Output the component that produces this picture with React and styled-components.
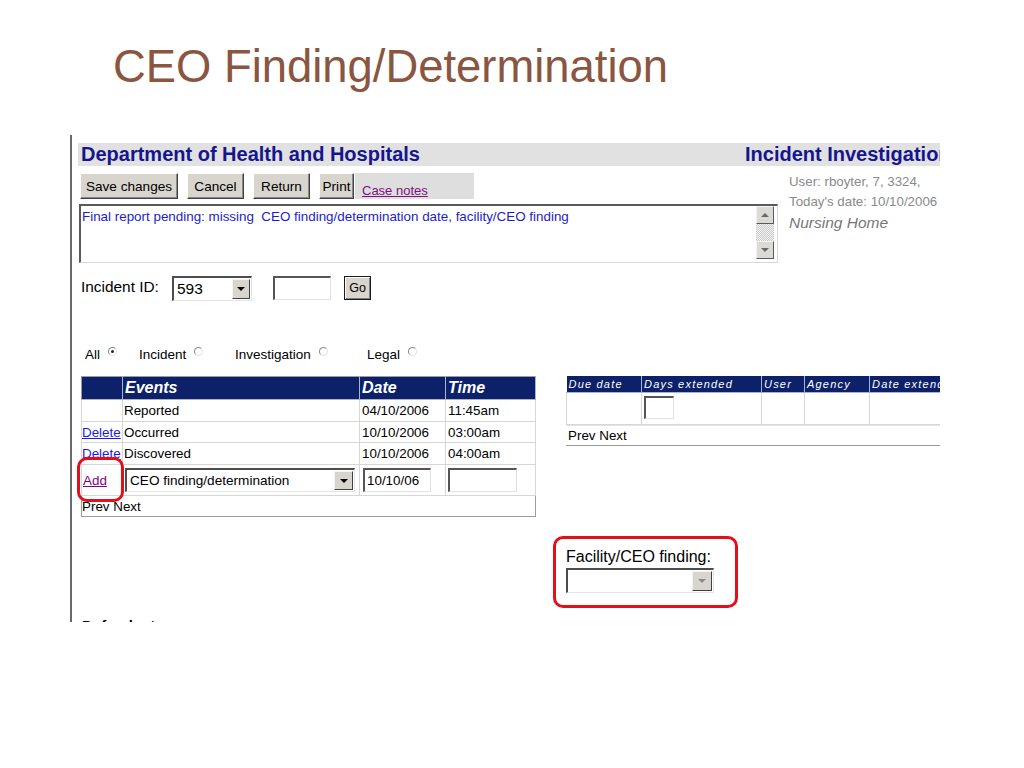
import React from 'react';
import styled, { createGlobalStyle } from 'styled-components';

const GlobalStyle = createGlobalStyle`
  html, body { margin: 0; padding: 0; background: #fff; }
  body { font-family: "Liberation Sans", Arial, sans-serif; }
`;

const Slide = styled.div`
  width: 1024px;
  height: 768px;
  overflow: hidden;
  background: #fff;
  padding-top: 41px;
  box-sizing: border-box;
`;

const Title = styled.h1`
  margin: 0 0 0 113px;
  font-weight: normal;
  font-size: 45.4px;
  line-height: 52px;
  color: #8b563f;
  font-family: "Liberation Sans", Arial, sans-serif;
`;

const Shot = styled.div`
  margin: 42px 0 0 70px;
  width: 870px;
  height: 487px;
  box-sizing: border-box;
  border-left: 2px solid #6a6a6a;
  overflow: hidden;
  padding: 8px 0 0 6px;
  font-family: "Liberation Sans", Arial, sans-serif;
  color: #000;
`;

const Inner = styled.div`
  width: 920px;
`;

const HeaderBar = styled.div`
  display: grid;
  grid-template-columns: 667px 1fr;
  height: 23px;
  background: #e1e1e1;
  font-weight: bold;
  font-size: 20px;
  line-height: 23px;
  color: #15158f;
  white-space: nowrap;
`;

const DeptName = styled.span`
  padding-left: 3px;
`;

const TopSection = styled.div`
  display: flex;
  margin-top: 6px;
`;

const LeftCol = styled.div`
  width: 700px;
  margin-left: 1px;
`;

const ButtonRow = styled.div`
  display: flex;
  height: 27px;
  padding-left: 1px;
`;

const ButtonGroup = styled.div`
  display: flex;
  gap: 9px;
`;

const Button = styled.button`
  width: ${p => p.$w}px;
  height: 26px;
  margin-top: 1px;
  padding: 0;
  box-sizing: border-box;
  background: #d8d5ce;
  border: 1px solid;
  border-color: #ffffff #404040 #404040 #ffffff;
  box-shadow: inset -1px -1px #8a8a8a;
  font-family: "Liberation Sans", Arial, sans-serif;
  font-size: 13.6px;
  color: #000;
  text-align: center;
`;

const CaseNotesCell = styled.div`
  width: 119px;
  height: 26px;
  margin-top: 1px;
  margin-left: 1px;
  box-sizing: border-box;
  padding: 9px 0 0 7px;
  background: #dedede;
  line-height: 16px;
`;

const CaseNotesLink = styled.a`
  font-size: 13px;
  color: #800f80;
  text-decoration: underline;
`;

const NoteBox = styled.div`
  display: flex;
  margin-top: 5px;
  width: 699px;
  height: 59px;
  box-sizing: border-box;
  border-style: solid;
  border-width: 2px 1px 1px 2px;
  border-color: #5a5a5a #d8d8d8 #d8d8d8 #5a5a5a;
  background: #fff;
`;

const NoteText = styled.div`
  flex: 1;
  padding: 3px 1px;
  font-size: 13.4px;
  line-height: 16px;
  color: #1d1dc8;
  white-space: pre;
  overflow: hidden;
`;

const ScrollTrack = styled.div`
  display: flex;
  flex-direction: column;
  justify-content: space-between;
  width: 18px;
  margin: 0 3px 3px 0;
  background: repeating-conic-gradient(#c9c9c9 0 25%, #f4f4f4 0 50%) 0 0 / 2px 2px;
`;

const ScrollButton = styled.div`
  display: flex;
  align-items: center;
  justify-content: center;
  height: 18px;
  box-sizing: border-box;
  background: #dcdad4;
  border: 1px solid;
  border-color: #f4f4f4 #5a5a5a #5a5a5a #f4f4f4;
`;

const Triangle = styled.span`
  width: 0;
  height: 0;
  border-left: ${p => p.$s}px solid transparent;
  border-right: ${p => p.$s}px solid transparent;
  ${p => (p.$up
    ? `border-bottom: ${p.$s}px solid ${p.$c};`
    : `border-top: ${p.$s}px solid ${p.$c};`)}
`;

const InfoCol = styled.div`
  margin-left: 10px;
  padding-top: 0;
  color: #8a8a8a;
  white-space: nowrap;
`;

const InfoLine = styled.div`
  font-size: 13.3px;
  line-height: 20px;
`;

const InfoItalic = styled.div`
  font-size: 15.5px;
  line-height: 21px;
  font-style: italic;
  color: #777;
`;

const IncidentRow = styled.div`
  display: flex;
  align-items: center;
  height: 26px;
  margin-top: 12px;
  padding-left: 3px;
`;

const FieldLabel = styled.span`
  width: ${p => p.$w}px;
  font-size: ${p => p.$fs}px;
  margin-top: -3px;
  white-space: nowrap;
`;

const SelectFrame = styled.div`
  display: flex;
  align-items: center;
  box-sizing: border-box;
  width: ${p => p.$w}px;
  height: ${p => p.$h}px;
  margin-left: ${p => p.$ml || 0}px;
  margin-top: ${p => p.$mt || 0}px;
  background: #fff;
  border-style: solid;
  border-width: 2px 1px 1px 2px;
  border-color: #4d4d4d #e4e4e4 #e4e4e4 #4d4d4d;
  padding: 0 1px 0 3px;
  font-size: ${p => p.$fs}px;
  color: #000;
`;

const SelectText = styled.span`
  flex: 1;
  white-space: nowrap;
  overflow: hidden;
`;

const DropButton = styled.span`
  display: flex;
  align-items: center;
  justify-content: center;
  width: ${p => p.$bw}px;
  align-self: stretch;
  margin: 1px 0;
  box-sizing: border-box;
  background: #d8d5ce;
  border: 1px solid;
  border-color: #f4f4f4 #404040 #404040 #f4f4f4;
`;

const TextInput = styled.div`
  display: flex;
  align-items: center;
  box-sizing: border-box;
  width: ${p => p.$w}px;
  height: ${p => p.$h}px;
  margin-left: ${p => p.$ml || 0}px;
  margin-top: ${p => p.$mt || 0}px;
  padding-left: 2px;
  background: #fff;
  border-style: solid;
  border-width: 2px 1px 1px 2px;
  border-color: #555 #e2e2e2 #e2e2e2 #555;
  font-size: 13.4px;
  white-space: nowrap;
`;

const GoButton = styled.button`
  width: 27px;
  height: 24px;
  margin-left: ${p => p.$ml}px;
  padding: 0;
  box-sizing: border-box;
  background: #d8d5ce;
  border: 1px solid #1a1a1a;
  box-shadow: inset 1px 1px #fff, inset -1px -1px #808080;
  font-family: "Liberation Sans", Arial, sans-serif;
  font-size: 12.5px;
  color: #000;
`;

const RadioRow = styled.div`
  display: flex;
  align-items: center;
  height: 17px;
  margin-top: 45px;
  padding-left: 7px;
  font-size: 13.5px;
`;

const RadioOption = styled.label`
  display: flex;
  align-items: center;
  gap: 8px;
  width: ${p => p.$w}px;
  white-space: nowrap;
`;

const RadioCircle = styled.span`
  position: relative;
  width: 9px;
  height: 9px;
  margin-bottom: 6px;
  box-sizing: border-box;
  border-radius: 50%;
  border: 1px solid;
  border-color: #8a8a8a #e2e2e2 #e2e2e2 #8a8a8a;
  background: #fff;
  &::after {
    content: "";
    display: ${p => (p.$checked ? 'block' : 'none')};
    position: absolute;
    left: 2px;
    top: 2px;
    width: 3px;
    height: 3px;
    border-radius: 50%;
    background: #222;
  }
`;

const MainGrid = styled.div`
  display: flex;
  align-items: flex-start;
  margin-top: 13px;
  padding-left: 3px;
`;

const Table = styled.table`
  border-collapse: collapse;
  table-layout: fixed;
  width: ${p => p.$w}px;
  border: ${p => (p.$outlined ? '1px solid #9c9c9c' : 'none')};
  font-size: 13.4px;
`;

const Col = styled.col`
  width: ${p => p.$w}px;
`;

const HeadCell = styled.th`
  height: ${p => p.$h}px;
  padding: 0 ${p => p.$pad}px;
  background: #0c2169;
  color: #fff;
  font-weight: ${p => (p.$bold ? 'bold' : 'normal')};
  font-style: italic;
  font-size: ${p => p.$fs}px;
  letter-spacing: ${p => p.$ls || 0}px;
  text-align: left;
  white-space: nowrap;
  overflow: hidden;
  border-right: 1px solid #aab2cc;
  border-bottom: 1px solid #aab2cc;
`;

const Cell = styled.td`
  position: relative;
  height: ${p => p.$h}px;
  padding: 0 ${p => (p.$pad === undefined ? 2 : p.$pad)}px;
  border: 1px solid #d6d6d6;
  vertical-align: ${p => p.$va || 'middle'};
  white-space: nowrap;
`;

const PlainCell = styled.td`
  height: ${p => p.$h}px;
  padding: 0 ${p => p.$pad}px;
  white-space: nowrap;
`;

const BlueLink = styled.a`
  color: #1a1aee;
  text-decoration: underline;
`;

const VisitedLink = styled.a`
  color: #800080;
  text-decoration: underline;
  padding-left: 1px;
`;

const Annotation = styled.span`
  position: absolute;
  top: ${p => p.$t}px;
  left: ${p => p.$l}px;
  right: ${p => p.$r}px;
  bottom: ${p => p.$b}px;
  border: 3px solid #e3101c;
  border-radius: 10px;
  pointer-events: none;
  z-index: 2;
`;

const RightCol = styled.div`
  margin-left: 30px;
  width: 420px;
`;

const PrevNextBar = styled.div`
  height: 21px;
  line-height: 20px;
  padding-left: 2px;
  box-sizing: border-box;
  border-top: 1px solid #e4e4e4;
  border-bottom: 1px solid #9a9a9a;
  font-size: 13.4px;
`;

const FacilityBlock = styled.div`
  position: relative;
  width: 148px;
  margin: 102px 0 0 0;
`;

const FacilityLabel = styled.div`
  font-size: 16px;
  line-height: 18px;
  white-space: nowrap;
`;

const Defendant = styled.div`
  margin-top: 24px;
  padding-left: 4px;
  font-weight: bold;
  font-size: 15px;
  line-height: 18px;
`;

function Select({ w, h, fs, ml, mt, bw, value, disabled }) {
  return (
    <SelectFrame $w={w} $h={h} $fs={fs} $ml={ml} $mt={mt}>
      <SelectText>{value}</SelectText>
      <DropButton $bw={bw}>
        <Triangle $s={4} $c={disabled ? '#8a8a8a' : '#000'} />
      </DropButton>
    </SelectFrame>
  );
}

export default function App() {
  return (
    <Slide>
      <GlobalStyle />
      <Title>CEO Finding/Determination</Title>
      <Shot>
        <Inner>
          <HeaderBar>
            <DeptName>Department of Health and Hospitals</DeptName>
            <span>Incident Investigation</span>
          </HeaderBar>

          <TopSection>
            <LeftCol>
              <ButtonRow>
                <ButtonGroup>
                  <Button $w={98}>Save changes</Button>
                  <Button $w={57}>Cancel</Button>
                  <Button $w={57}>Return</Button>
                  <Button $w={35}>Print</Button>
                </ButtonGroup>
                <CaseNotesCell>
                  <CaseNotesLink>Case notes</CaseNotesLink>
                </CaseNotesCell>
              </ButtonRow>
              <NoteBox>
                <NoteText>Final report pending: missing  CEO finding/determination date, facility/CEO finding</NoteText>
                <ScrollTrack>
                  <ScrollButton><Triangle $up $s={4} $c="#6a6a6a" /></ScrollButton>
                  <ScrollButton><Triangle $s={4} $c="#6a6a6a" /></ScrollButton>
                </ScrollTrack>
              </NoteBox>
            </LeftCol>
            <InfoCol>
              <InfoLine>User: rboyter, 7, 3324,</InfoLine>
              <InfoLine>Today's date: 10/10/2006</InfoLine>
              <InfoItalic>Nursing Home</InfoItalic>
            </InfoCol>
          </TopSection>

          <IncidentRow>
            <FieldLabel $w={91} $fs={15.4}>Incident ID:</FieldLabel>
            <Select w={80} h={25} fs={15.5} bw={18} value="593" />
            <TextInput $w={58} $h={24} $ml={21} />
            <GoButton $ml={13}>Go</GoButton>
          </IncidentRow>

          <RadioRow>
            <RadioOption $w={54}>All <RadioCircle $checked /></RadioOption>
            <RadioOption $w={96}>Incident <RadioCircle /></RadioOption>
            <RadioOption $w={132}>Investigation <RadioCircle /></RadioOption>
            <RadioOption $w={60}>Legal <RadioCircle /></RadioOption>
          </RadioRow>

          <MainGrid>
            <Table $w={454} $outlined>
              <colgroup>
                <Col $w={41} />
                <Col $w={237} />
                <Col $w={86} />
                <Col $w={90} />
              </colgroup>
              <thead>
                <tr>
                  <HeadCell $h={22} $pad={2} $fs={16} $bold />
                  <HeadCell $h={22} $pad={2} $fs={16} $bold>Events</HeadCell>
                  <HeadCell $h={22} $pad={2} $fs={16} $bold>Date</HeadCell>
                  <HeadCell $h={22} $pad={2} $fs={16} $bold>Time</HeadCell>
                </tr>
              </thead>
              <tbody>
                <tr>
                  <Cell $h={21} $pad={0} />
                  <Cell $h={21} $pad={1}>Reported</Cell>
                  <Cell $h={21}>04/10/2006</Cell>
                  <Cell $h={21}>11:45am</Cell>
                </tr>
                <tr>
                  <Cell $h={20} $pad={0}><BlueLink>Delete</BlueLink></Cell>
                  <Cell $h={20} $pad={1}>Occurred</Cell>
                  <Cell $h={20}>10/10/2006</Cell>
                  <Cell $h={20}>03:00am</Cell>
                </tr>
                <tr>
                  <Cell $h={21} $pad={0}><BlueLink>Delete</BlueLink></Cell>
                  <Cell $h={21} $pad={1}>Discovered</Cell>
                  <Cell $h={21}>10/10/2006</Cell>
                  <Cell $h={21}>04:00am</Cell>
                </tr>
                <tr>
                  <Cell $h={30} $pad={0}>
                    <VisitedLink>Add</VisitedLink>
                    <Annotation $t={-8} $l={-5} $r={-2} $b={-7} />
                  </Cell>
                  <Cell $h={30} $pad={2}>
                    <Select w={230} h={24} fs={13.6} bw={19} value="CEO finding/determination" />
                  </Cell>
                  <Cell $h={30} $pad={2}>
                    <TextInput $w={68} $h={24} $ml={1}>10/10/06</TextInput>
                  </Cell>
                  <Cell $h={30} $pad={2}>
                    <TextInput $w={69} $h={24} />
                  </Cell>
                </tr>
                <tr>
                  <PlainCell colSpan={4} $h={20} $pad={0}>Prev Next</PlainCell>
                </tr>
              </tbody>
            </Table>

            <RightCol>
              <Table $w={420}>
                <colgroup>
                  <Col $w={75} />
                  <Col $w={120} />
                  <Col $w={43} />
                  <Col $w={65} />
                  <Col $w={117} />
                </colgroup>
                <thead>
                  <tr>
                    <HeadCell $h={16} $pad={2} $fs={11} $ls={1.2}>Due date</HeadCell>
                    <HeadCell $h={16} $pad={2} $fs={11} $ls={1.2}>Days extended</HeadCell>
                    <HeadCell $h={16} $pad={2} $fs={11} $ls={1.2}>User</HeadCell>
                    <HeadCell $h={16} $pad={2} $fs={11} $ls={1.2}>Agency</HeadCell>
                    <HeadCell $h={16} $pad={2} $fs={11} $ls={1.2}>Date extended</HeadCell>
                  </tr>
                </thead>
                <tbody>
                  <tr>
                    <Cell $h={31} $va="top" />
                    <Cell $h={31} $va="top">
                      <TextInput $w={30} $h={23} $mt={3} />
                    </Cell>
                    <Cell $h={31} $va="top" />
                    <Cell $h={31} $va="top" />
                    <Cell $h={31} $va="top" />
                  </tr>
                </tbody>
              </Table>
              <PrevNextBar>Prev Next</PrevNextBar>

              <FacilityBlock>
                <FacilityLabel>Facility/CEO finding:</FacilityLabel>
                <Select w={148} h={25} mt={2} fs={14} bw={20} value="" disabled />
                <Annotation $t={-12} $l={-13} $r={-24} $b={-15} />
              </FacilityBlock>
            </RightCol>
          </MainGrid>

          <Defendant>Defendants</Defendant>
        </Inner>
      </Shot>
    </Slide>
  );
}
